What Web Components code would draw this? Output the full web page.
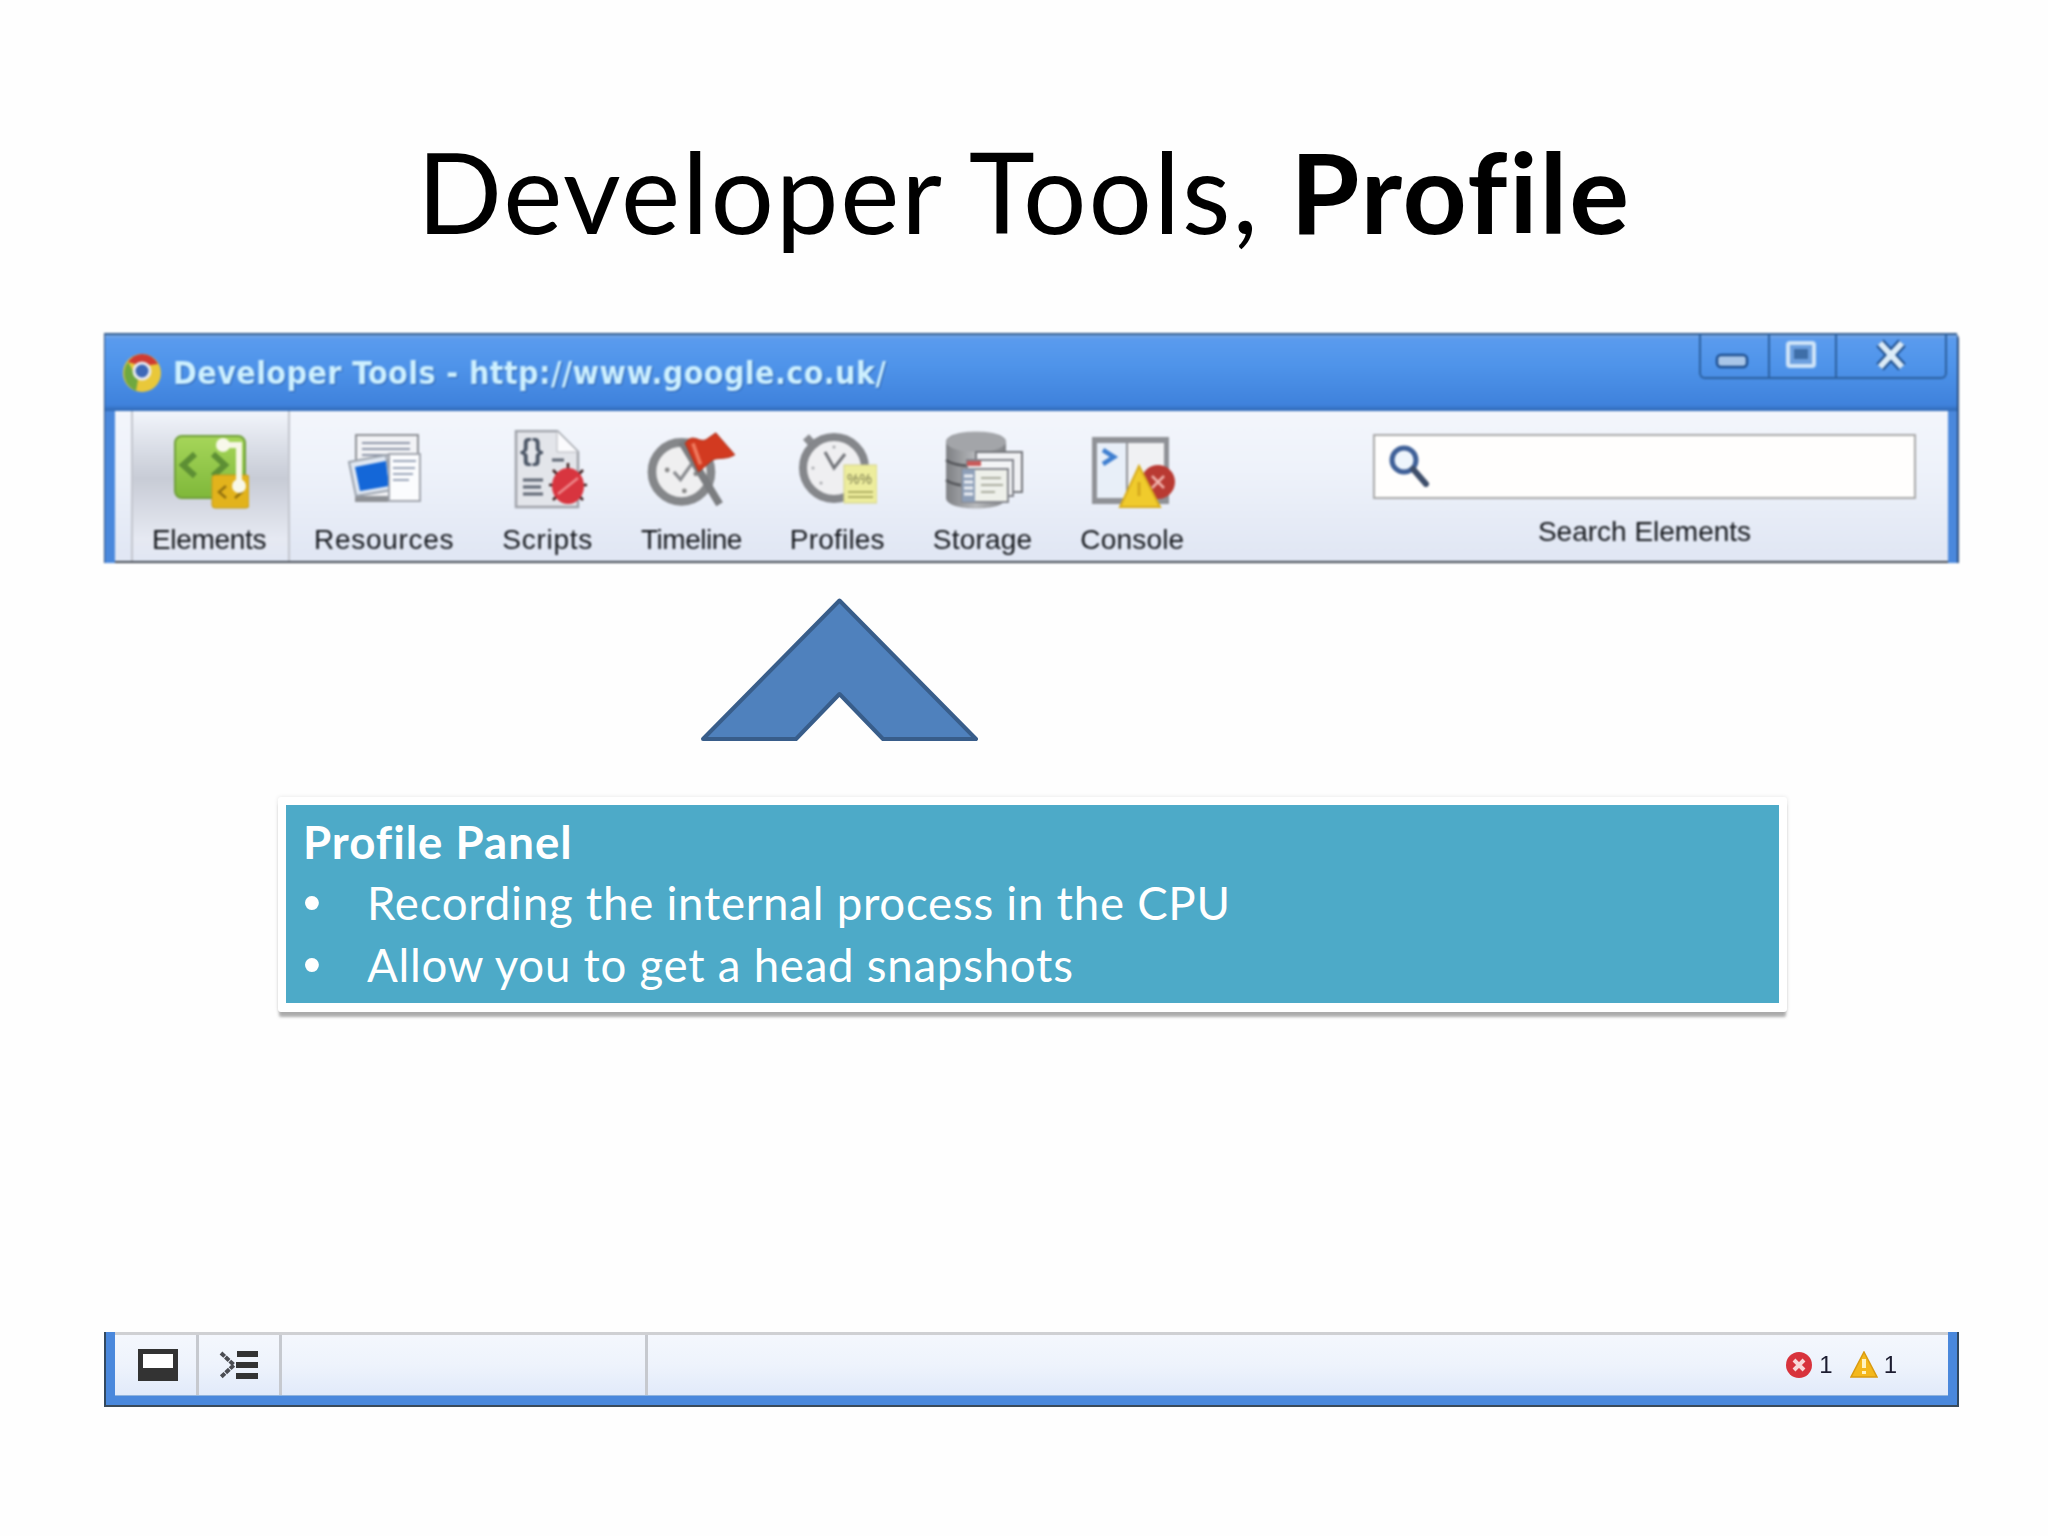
<!DOCTYPE html>
<html><head><meta charset="utf-8"><title>Developer Tools, Profile</title>
<style>html,body{margin:0;padding:0;background:#fefefe;width:2048px;height:1536px;overflow:hidden}</style>
</head><body>
<dev-slide>
  <slide-title>Developer Tools, <b>Profile</b></slide-title>
  <dt-window win-title="Developer Tools - http://www.google.co.uk/">
    <dt-tab label="Elements" ls="-.33" active><svg viewBox="0 0 80 80" width="80" height="80">
      <defs><linearGradient id="g1" x1="0" y1="0" x2="0" y2="1"><stop offset="0" stop-color="#a6d65a"/><stop offset="1" stop-color="#7fb83a"/></linearGradient></defs>
      <rect x="6" y="6" width="70" height="62" rx="7" fill="url(#g1)" stroke="#6f9f3a" stroke-width="2"/>
      <path d="M26 24 L14 35 L26 46M44 24 L56 35 L44 46" fill="none" stroke="#5d8f34" stroke-width="6"/>
      <rect x="43" y="45" width="37" height="33" rx="3" fill="#e2b31c" stroke="#c39a18"/>
      <path d="M57 56 L50 62 L57 68M66 56 L73 62 L66 68" fill="none" stroke="#91700f" stroke-width="2.4"/>
      <path d="M53 15 H70 V55" fill="none" stroke="#f6f6e6" stroke-width="6"/>
      <circle cx="54" cy="15" r="7" fill="#f8f8ea"/><circle cx="70" cy="56" r="7" fill="#f8f8ea"/>
    </svg></dt-tab>
    <dt-tab label="Resources" ls=".7"><svg viewBox="2 0 80 80" width="80" height="80">
      <rect x="13" y="4" width="64" height="68" fill="#8e9196"/>
      <rect x="15" y="6" width="60" height="60" fill="#f2f3f6"/>
      <path d="M20 13h48M20 19h48M20 25h36M20 31h26" stroke="#8d95a8" stroke-width="2"/>
      <path d="M7 32 L44 25 L50 60 L14 66 Z" fill="#dfe7f2" stroke="#9ca3ad" stroke-width="2"/>
      <path d="M13 37 L44 31 L47 56 L18 61 Z" fill="#1467d8"/>
      <rect x="47" y="24" width="31" height="47" fill="#fbfcfe" stroke="#a2a6ae" stroke-width="2"/>
      <path d="M51 31h23M51 38h22M51 44h20M51 50h16" stroke="#9aa5b8" stroke-width="1.8"/>
    </svg></dt-tab>
    <dt-tab label="Scripts" ls=".75"><svg viewBox="0 0 80 80" width="80" height="80">
      <path d="M8 1 H49 L70 22 V77 H8 Z" fill="#e3e5ea" stroke="#a0a3aa" stroke-width="2.5"/>
      <path d="M49 1 V22 H70 Z" fill="#fbfbfd" stroke="#b5b8be"/>
      <text x="12" y="30" font-family="Liberation Sans,sans-serif" font-size="30" font-weight="700" fill="#4c5666">{}</text>
      <path d="M15 50h20M15 57h18M15 64h20M44 30h12" stroke="#5e6572" stroke-width="3"/>
      <g stroke="#3c1d1d" stroke-width="2.5"><path d="M45 40 L75 70M75 40 L45 70M41 55H79M60 33V40"/></g>
      <ellipse cx="60" cy="56" rx="16" ry="18" fill="#d8353f"/>
      <path d="M50 64 L70 48" stroke="#ee8a8d" stroke-width="2.5"/>
    </svg></dt-tab>
    <dt-tab label="Timeline" ls="-.5"><svg viewBox="0 0 84 80" width="80" height="80" style="overflow:visible">
      <circle cx="32" cy="42" r="31" fill="#efeff0" stroke="#85878a" stroke-width="9"/>
      <path d="M24 42 L31 50 L43 33" fill="none" stroke="#8a8c90" stroke-width="3.4"/>
      <circle cx="17" cy="40" r="2.5" fill="#888"/><circle cx="35" cy="62" r="2.5" fill="#888"/><circle cx="47" cy="44" r="2.5" fill="#888"/>
      <path d="M32 10 L72 76" stroke="#7b7d80" stroke-width="8"/>
      <path d="M36 12 C44 0 50 12 58 8 L68 1 L88 24 C78 30 70 26 64 30 L50 42 Z" fill="#d23a20" stroke="#a82c14"/>
      <path d="M44 12 L52 34" stroke="#ee7a5e" stroke-width="4"/>
    </svg></dt-tab>
    <dt-tab label="Profiles" ls=".2"><svg viewBox="0 0 80 80" width="80" height="80">
      <path d="M9 7 L18 17" stroke="#8a8c90" stroke-width="8"/>
      <circle cx="37" cy="38" r="31" fill="#efeff1" stroke="#85878b" stroke-width="8"/>
      <path d="M28 22 L37 38 L48 24" fill="none" stroke="#73757a" stroke-width="3"/>
      <g fill="#a5a7ab"><circle cx="16" cy="38" r="1.5"/><circle cx="37" cy="17" r="1.5"/><circle cx="24" cy="53" r="1.5"/></g>
      <rect x="47" y="35" width="33" height="38" fill="#eded9d" stroke="#d3d289"/>
      <text x="50" y="54" font-family="Liberation Sans,sans-serif" font-size="14" fill="#7b7b4d">%%</text>
      <path d="M51 62h25M51 67h25" stroke="#b0af63" stroke-width="2"/>
    </svg></dt-tab>
    <dt-tab label="Storage" ls=".2"><svg viewBox="2 0 80 80" width="80" height="80" style="overflow:visible">
      <defs><linearGradient id="g2" x1="0" y1="0" x2="1" y2="0"><stop offset="0" stop-color="#7e8084"/><stop offset=".5" stop-color="#b8babd"/><stop offset="1" stop-color="#808286"/></linearGradient></defs>
      <path d="M5 12 C5 -2 65 -2 65 12 V68 C65 82 5 82 5 68 Z" fill="url(#g2)"/>
      <ellipse cx="35" cy="12" rx="30" ry="10" fill="#a3a5a9"/>
      <path d="M5 30 C15 38 55 38 65 30M5 50 C15 58 55 58 65 50" fill="none" stroke="#54565a" stroke-width="2.5"/>
      <rect x="35" y="22" width="46" height="40" fill="#f0f1f4" stroke="#74767b" stroke-width="2"/>
      <rect x="26" y="30" width="46" height="36" fill="#f4f5f7" stroke="#80828a" stroke-width="2"/>
      <rect x="21" y="39" width="46" height="33" fill="#eef0ea" stroke="#85878d" stroke-width="2"/>
      <rect x="21" y="39" width="13" height="33" fill="#8e9fb8"/>
      <path d="M23 46h9M23 52h9M23 58h9M23 64h9" stroke="#eef1f6" stroke-width="3"/>
      <rect x="26" y="31" width="14" height="5" fill="#c95b5b"/>
      <path d="M40 48h20M40 55h22M40 62h14" stroke="#a9ac9e" stroke-width="2"/>
    </svg></dt-tab>
    <dt-tab label="Console" ls=".2"><svg viewBox="2 0 80 80" width="80" height="80" style="overflow:visible">
      <rect x="2" y="7" width="77" height="67" fill="#8f9196"/>
      <rect x="7" y="13" width="29" height="55" fill="#e8eff8"/>
      <rect x="38" y="13" width="36" height="55" fill="#f0f1f3"/>
      <path d="M13 20 L24 27 L13 34" fill="none" stroke="#3f7fd0" stroke-width="4.5"/>
      <circle cx="68" cy="52" r="17" fill="#b93a32"/>
      <path d="M62 46 L74 58M74 46 L62 58" stroke="#efb3ac" stroke-width="2.5"/>
      <path d="M49 36 L30 77 H70 Z" fill="#f0cb2c" stroke="#d9ad1d" stroke-width="2"/>
      <path d="M49 52V66" stroke="#d5a91e" stroke-width="3"/>
    </svg></dt-tab>
  </dt-window>
  <up-arrow></up-arrow>
  <callout-panel>
    <strong slot="head">Profile Panel</strong>
    <span>Recording the internal process in the CPU</span>
    <span>Allow you to get a head snapshots</span>
  </callout-panel>
  <dt-statusbar></dt-statusbar>
</dev-slide>
<script>
function shadow(el, html){ el.attachShadow({mode:'open'}).innerHTML = html; }
class DevSlide extends HTMLElement{ connectedCallback(){ if(this.shadowRoot)return; shadow(this,`<style>:host{display:flex;flex-direction:column;width:2048px;height:1536px;box-sizing:border-box;background:#fefefe;font-family:"Liberation Sans",Arial,sans-serif}</style><slot></slot>`);} }
class SlideTitle extends HTMLElement{ connectedCallback(){ if(this.shadowRoot)return; shadow(this,`<style>:host{display:block;height:333px;box-sizing:border-box;padding-top:118px;text-align:center;font:400 112px/146px Lato,sans-serif;color:#000;letter-spacing:1.85px;white-space:nowrap}
::slotted(b){font-weight:700}</style><slot></slot>`);} }
class DtWindow extends HTMLElement{ connectedCallback(){ if(this.shadowRoot)return; shadow(this,`<style>
:host{display:block;width:1855px;margin-left:104px;height:230px;box-sizing:border-box;background:#4a88dc;border-left:1.5px solid #2d4f7e;border-right:2px solid #2d4f7e;border-top-right-radius:6px;filter:blur(.9px)}
.bar{height:78px;box-sizing:border-box;display:flex;align-items:center;padding-left:16px;position:relative;border-top:2px solid #2f5b8f;background:linear-gradient(#7aa8e4 0,#5a9bee 4px,#4f94ea 30px,#3f82dc 70px,#2f68b4 76px,#2c5fa6 78px)}
.t{margin-left:10px;font:700 32px/40px "DejaVu Sans",sans-serif;font-stretch:condensed;color:#cdf0ff;letter-spacing:.35px;white-space:nowrap;text-shadow:1px 1px 1px #2a5fae}
.btns{position:absolute;right:10px;top:-2px;height:46px;width:248px;box-sizing:border-box;border:2px solid #2c609f;border-top:0;border-radius:0 0 6px 6px;display:grid;grid-template-columns:67px 67px 1fr}
.btns>div{display:flex;align-items:center;justify-content:center}
.btns>div+div{border-left:2px solid #2c609f}
.tool{margin:0 9px 0 10px;height:152px;display:flex;background:linear-gradient(#f3f6fc,#eef2fa 40%,#e1e7f4 95%);border-bottom:2px solid #3f4650;padding-left:16px;box-sizing:border-box}
.search{margin-left:auto;margin-right:32px;width:543px;text-align:center}
.box{margin-top:23px;height:65px;box-sizing:border-box;border:2px solid #a9a9a9;background:#fffefd;display:flex;align-items:center;padding-left:12px}
.box svg{margin-top:-4px}
.lab{margin-top:16px;font:28px/34px "Liberation Sans",sans-serif;color:#14171c}
.tabs{display:flex}
</style>
<div class="bar"><svg width="42" height="42" viewBox="0 0 42 42"><circle cx="21" cy="21" r="19" fill="#e9c83a"/><path d="M21 2 A19 19 0 0 1 37 12 L21 14 L7 10 A19 19 0 0 1 21 2Z" fill="#cf3a32"/><path d="M7 10 L17 28 L15 39 A19 19 0 0 1 7 10Z" fill="#6fa83f"/><circle cx="21" cy="19" r="8" fill="#3d68b8" stroke="#e9e9ef" stroke-width="3"/></svg><span class="t"></span>
<div class="btns"><div><svg style="margin:12px 0 0 -6px" width="34" height="18" viewBox="0 0 34 18"><rect x="2" y="3" width="30" height="12" rx="4" fill="#a9c6e8" stroke="#1e4f8f" stroke-width="2.5"/></svg></div><div><svg style="margin-left:-4px" width="32" height="30" viewBox="0 0 32 30"><rect x="3" y="3" width="26" height="23" rx="2" fill="#6c9fdf" stroke="#cfe4f8" stroke-width="4"/><rect x="9" y="9" width="14" height="10" fill="#3e6ea8"/></svg></div><div><svg width="36" height="32" viewBox="0 0 36 32"><path d="M7 4 L29 28M29 4 L7 28" stroke="#1f4f8d" stroke-width="10"/><path d="M7 4 L29 28M29 4 L7 28" stroke="#dcecf8" stroke-width="6"/></svg></div></div></div>
<div class="tool"><div class="tabs"><slot></slot></div>
<div class="search"><div class="box"><svg width="44" height="44" viewBox="0 0 44 44"><circle cx="17" cy="17" r="12" fill="#eef5fc" stroke="#3f6098" stroke-width="5"/><path d="M26 26 L39 41" stroke="#3e4e6a" stroke-width="6" stroke-linecap="round"/></svg></div><div class="lab">Search Elements</div></div></div>`);
 this.shadowRoot.querySelector('.t').textContent=this.getAttribute('win-title');} }
class DtTab extends HTMLElement{ connectedCallback(){ if(this.shadowRoot)return; shadow(this,`<style>
:host{display:flex;flex-direction:column;align-items:center;padding:19px 24px 0;height:150px;box-sizing:border-box;font:28px/34px "Liberation Sans",sans-serif;color:#14171c}
:host([active]){padding:19px 24px 0 21px;background:linear-gradient(rgba(190,196,208,0),#c8ccd6 45%,#e6e9f2 85%,rgba(235,238,246,0));box-shadow:inset 2px 0 0 #c2c5cd,inset -2px 0 0 #c2c5cd}
.l{margin-top:13px;white-space:nowrap}
::slotted(svg){display:block}
</style><slot></slot><span class="l"></span>`);
 const l=this.shadowRoot.querySelector('.l'); l.textContent=this.getAttribute('label'); l.style.letterSpacing=(this.getAttribute('ls')||0)+'px';} }
class UpArrow extends HTMLElement{ connectedCallback(){ if(this.shadowRoot)return; shadow(this,`<style>:host{display:block;height:234px;padding-left:698px;padding-top:34px;box-sizing:border-box}svg{display:block}</style>
<svg width="284" height="146" viewBox="698 597 284 146"><path d="M839.5 600.5 L976 739 H883 L839.5 694 L796 739 H703 Z" fill="#4f81bd" stroke="#385d8a" stroke-width="4" stroke-linejoin="round"/></svg>`);} }
class CalloutPanel extends HTMLElement{ connectedCallback(){ if(this.shadowRoot)return; shadow(this,`<style>
:host{display:block;width:1509px;margin-left:278px;box-sizing:border-box;border:8px solid #fff;border-bottom-width:9px;border-radius:3px;background:#4daac8;padding:6px 17px;height:215px;box-shadow:0 6px 3px -1px rgba(120,120,120,.6),0 0 4px rgba(0,0,0,.1);color:#fff;font:400 45.6px/61.3px Lato,sans-serif;letter-spacing:.75px}
::slotted(strong){font-weight:700;display:block;letter-spacing:1px}
.w{display:grid;grid-template-columns:64px 1fr}
.w i{font:normal 51px/61.3px "Liberation Sans",sans-serif;grid-column:1}
::slotted(span){grid-column:2}
</style><slot name="head"></slot><div class="w"><i style="grid-row:1">•</i><i style="grid-row:2">•</i><slot></slot></div>`);} }
class DtStatusbar extends HTMLElement{ connectedCallback(){ if(this.shadowRoot)return; shadow(this,`<style>
:host{display:block;width:1855px;margin-left:104px;margin-top:320px;height:75px;box-sizing:border-box;background:#4a88dc;border-left:2px solid #33495f;border-right:2px solid #33495f;border-bottom:2px solid #3a4a5a;filter:blur(.6px)}
.in{margin:0 9px;height:64px;box-sizing:border-box;border-top:3px solid #cfd0d3;border-bottom:1px solid #8fb3dd;display:flex;background:linear-gradient(#f4f7fd,#eef3fc 50%,#e1eafa)}
.c{border-right:3px solid #c6c9cf;display:flex;align-items:center;justify-content:center;box-sizing:border-box}
.c1{width:84px}.c2{width:83px}.c3{width:366px}
.r{margin-left:auto;display:flex;align-items:center;padding-right:45px;font:24px/30px "Liberation Sans",sans-serif;color:#1c1c30}
.r span{margin:0 6px}
</style><div class="in"><div class="c c1"><svg width="40" height="32" viewBox="0 0 40 32" style="margin-left:5px"><rect width="40" height="32" fill="#333"/><rect x="5" y="5" width="30" height="14" fill="#fff"/></svg></div><div class="c c2"><svg width="40" height="28" viewBox="0 0 40 28"><path d="M2 2 L15 14 L2 26" fill="none" stroke="#4a4c52" stroke-width="4" stroke-dasharray="5 1"/><path d="M18 3H39M17 14H39M17 25H39" stroke="#333" stroke-width="6"/></svg></div><div class="c c3"></div>
<div class="r"><svg width="28" height="28" viewBox="0 0 28 28"><circle cx="14" cy="14" r="13" fill="#d8333c"/><path d="M9 9 L19 19M19 9 L9 19" stroke="#f8d8d8" stroke-width="4"/></svg><span>1</span><svg style="margin-left:11px" width="28" height="28" viewBox="0 0 28 28"><path d="M14 1 L27 26 H1 Z" fill="#f4b81c" stroke="#d99a10" stroke-width="1.5"/><path d="M14 8V17M14 20V23" stroke="#fff3c0" stroke-width="4"/></svg><span>1</span></div></div>`);} }
customElements.define('dev-slide',DevSlide);
customElements.define('slide-title',SlideTitle);
customElements.define('dt-window',DtWindow);
customElements.define('dt-tab',DtTab);
customElements.define('up-arrow',UpArrow);
customElements.define('callout-panel',CalloutPanel);
customElements.define('dt-statusbar',DtStatusbar);
</script>
</body></html>
